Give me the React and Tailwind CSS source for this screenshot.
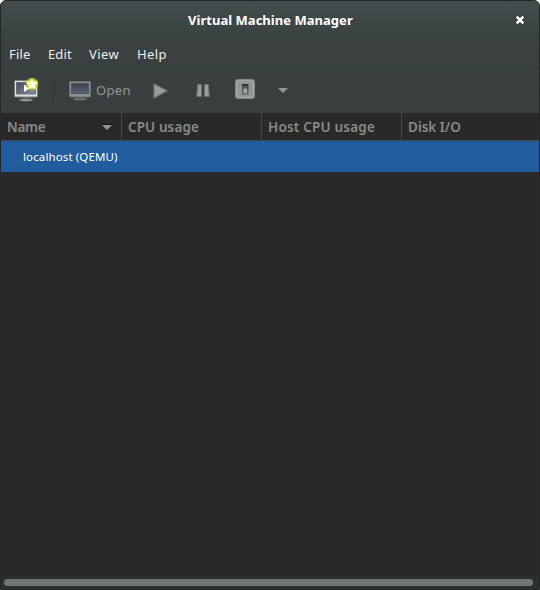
import React from "react";

const menus = [
  { label: "File", cls: "w-[39px] tracking-[0.2px]" },
  { label: "Edit", cls: "w-[41px] tracking-[0.1px]" },
  { label: "View", cls: "w-[48px] tracking-[0.4px]" },
  { label: "Help", cls: "w-[40px] tracking-[0.4px]" },
];

function NewMachineIcon() {
  return (
    <svg width="27" height="26" viewBox="13 77 27 26" className="shrink-0">
      <defs>
        <linearGradient id="newScreen" x1="0" y1="0" x2="1" y2="1">
          <stop offset="0" stopColor="#3f4a5c" />
          <stop offset="1" stopColor="#8592a4" />
        </linearGradient>
        <radialGradient id="starGlow">
          <stop offset="0.4" stopColor="#f2f018" />
          <stop offset="0.75" stopColor="#d8dc10" stopOpacity="0.8" />
          <stop offset="1" stopColor="#b8c010" stopOpacity="0" />
        </radialGradient>
      </defs>
      <ellipse cx="26" cy="100" rx="7" ry="1.2" fill="#a0a3a0" />
      <rect x="22" y="97" width="8" height="2.5" fill="#5f6462" />
      <rect x="14.5" y="80.5" width="23" height="16.5" rx="1" fill="#dedfdc" stroke="#777c79" />
      <rect x="16.5" y="82.5" width="19" height="11.5" fill="url(#newScreen)" stroke="#596270" strokeWidth="0.8" />
      <path d="M24 84.5v7.5l5.5-3.5z" fill="#fff" />
      <circle cx="32" cy="84" r="7" fill="url(#starGlow)" />
      <path d="m32 78.5 1.7 3.6 4.1.4-3 2.8.9 4.1-3.7-2.2-3.7 2.2.9-4.1-3-2.8 4.1-.4z" fill="#fffff0" />
    </svg>
  );
}

function MonitorIcon() {
  return (
    <svg width="24" height="22" viewBox="68 80 24 22" className="shrink-0">
      <defs>
        <linearGradient id="openScreen" x1="0" y1="0" x2="0" y2="1">
          <stop offset="0" stopColor="#3b4551" />
          <stop offset="1" stopColor="#566170" />
        </linearGradient>
      </defs>
      <ellipse cx="80" cy="99.2" rx="7" ry="1.2" fill="#747977" />
      <rect x="76" y="97" width="8" height="1.6" fill="#4c5250" />
      <rect x="69.5" y="81.5" width="21" height="15.5" rx="1" fill="#8d918f" stroke="#6a706e" />
      <rect x="71.5" y="83.5" width="17" height="10" fill="url(#openScreen)" stroke="#444c54" strokeWidth="0.8" />
    </svg>
  );
}

function PlayIcon() {
  return (
    <svg width="17" height="18" viewBox="152 82 17 18" className="shrink-0">
      <path d="M153.9 83.8v14.4l13.3-7.5z" fill="#999d9b" stroke="#6b716f" strokeWidth="1.2" strokeLinejoin="round" />
    </svg>
  );
}

function PauseIcon() {
  return (
    <svg width="16" height="17" viewBox="195 82 16 17" className="shrink-0">
      <path d="M197.7 84.5h3.8v12h-4.8zM204.5 84.5h3.8l1 12h-4.8z" fill="#989c9a" stroke="#6b716f" strokeLinejoin="round" />
    </svg>
  );
}

function ShutdownIcon() {
  return (
    <svg width="20" height="20" viewBox="235 79 20 20" className="shrink-0">
      <defs>
        <linearGradient id="switchWell" x1="0" y1="0" x2="0" y2="1">
          <stop offset="0" stopColor="#2d3231" />
          <stop offset="1" stopColor="#747977" />
        </linearGradient>
      </defs>
      <rect x="235.5" y="79.5" width="19" height="19" rx="2.5" fill="#a0a4a2" stroke="#858a88" />
      <rect x="237.5" y="81.5" width="15" height="15" rx="1.5" fill="#929795" />
      <rect x="242" y="84" width="6.5" height="11" fill="url(#switchWell)" />
      <rect x="243.5" y="86" width="3.5" height="7" fill="#a4a7a5" />
      <rect x="243.5" y="86" width="3.5" height="2.5" fill="#555a58" />
    </svg>
  );
}

export default function App() {
  return (
    <div className="h-[590px] w-[540px] bg-white font-['Noto_Sans','Open_Sans',sans-serif]">
      <div className="flex h-full flex-col overflow-hidden rounded-t-[6px] border border-[#22282a] bg-[#292929]">
        <div className="flex h-[112px] shrink-0 flex-col bg-[linear-gradient(#434d4d_0px,#3a4140_38px,#393f3f_112px)]">
          <header className="flex h-[38px] items-center pl-[187px] pr-[14px]">
            <h1 className="grow whitespace-nowrap pt-[2px] text-[13px] font-bold tracking-[0.03px] text-white">Virtual Machine Manager</h1>
            <button aria-label="Close">
              <svg width="10" height="10" viewBox="0 0 10 10">
                <path d="m1.7 1.7 6.6 6.6M8.3 1.7 1.7 8.3" stroke="#fff" strokeWidth="2.4" />
              </svg>
            </button>
          </header>
          <nav className="flex h-[29px] items-center border-b border-[#323a3a] pl-2 pt-[3px] text-[13px] text-[#eeeeec]">
            {menus.map((m) => (
              <span key={m.label} className={`shrink-0 whitespace-nowrap ${m.cls}`}>{m.label}</span>
            ))}
          </nav>
          <div className="flex h-[44px] items-center pl-3">
            <NewMachineIcon />
            <span className="ml-[13px] h-6 w-px bg-[#313737]" />
            <span className="ml-[14px] mt-[2px]"><MonitorIcon /></span>
            <span className="ml-[4px] w-[56px] pt-[2px] text-[13px] tracking-[0.3px] text-[#929695]">Open</span>
            <span className="mt-[2px]"><PlayIcon /></span>
            <span className="ml-[26px] mt-px"><PauseIcon /></span>
            <span className="ml-[24px] -mt-[2px]"><ShutdownIcon /></span>
            <svg width="10" height="5" viewBox="0 0 10 5" className="ml-[23px]">
              <path d="M0 0h10L5 5z" fill="#929695" />
            </svg>
          </div>
        </div>
        <div className="flex h-[28px] shrink-0 border-b border-[#434747] bg-[#292929] text-[13.5px] font-semibold text-[#888a87]">
          <div className="flex w-[121px] items-center justify-between border-r border-[#434747] pl-[6px] pr-[9px]">
            <span className="pt-[2px] tracking-[-0.3px]">Name</span>
            <svg width="10" height="6" viewBox="0 0 10 6">
              <path d="M0 0h10v1H0z" fill="#111" />
              <path d="M0 1h10L5 6z" fill="#929695" />
            </svg>
          </div>
          <div className="flex w-[140px] items-center border-r border-[#434747] pl-[6px] pt-[2px] tracking-[0.1px]">CPU usage</div>
          <div className="flex w-[140px] items-center border-r border-[#434747] pl-[6px] pt-[2px] tracking-[0.2px]">Host CPU usage</div>
          <div className="flex items-center pl-[6px] pt-[2px]">Disk I/O</div>
        </div>
        <div className="flex h-[31px] shrink-0 items-center bg-[#215d9c] pl-[22px] text-[11.5px] tracking-[0.12px] text-white">localhost (QEMU)</div>
        <div className="grow" />
        <div className="flex h-[13px] shrink-0 items-center bg-[#2b3131] px-[3px]">
          <div className="h-[7px] w-[529px] rounded-full bg-[#727675]" />
        </div>
      </div>
    </div>
  );
}
